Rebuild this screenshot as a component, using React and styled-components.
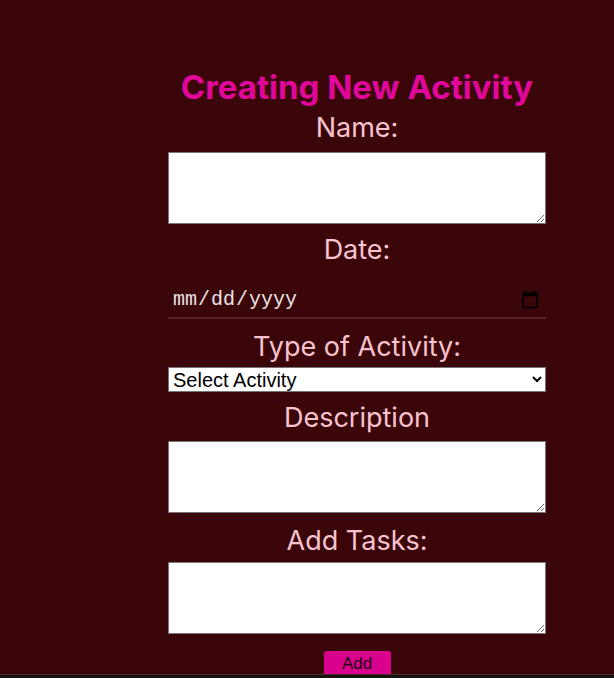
import React, { useState } from "react";
import styled, { createGlobalStyle } from "styled-components";

const GlobalStyle = createGlobalStyle`
  html, body {
    margin: 0;
    padding: 0;
    background: #171212;
  }
  #root {
    height: 678px;
    overflow: hidden;
  }
`;

const StyledPage = styled.div`
  display: grid;
  grid-template-columns: 100px 1fr;
  height: 675px;
  overflow: hidden;
  background: #3b060a;
  border-bottom: 1px solid #4d2a2a;
  box-sizing: border-box;
`;

const StyledSide = styled.aside`
  background: #3b060a;
`;

const StyledMain = styled.main`
  display: flex;
  justify-content: center;
  padding-top: 65px;
`;

const StyledForm = styled.form`
  display: flex;
  flex-direction: column;
  align-items: center;
  width: 378px;
`;

const StyledTitle = styled.h1`
  margin: 0;
  font-family: Inter, "Liberation Sans", sans-serif;
  font-weight: 700;
  font-size: 33px;
  line-height: 45px;
  color: #e0079a;
  white-space: nowrap;
`;

const StyledLabel = styled.label`
  font-family: Inter, "Liberation Sans", sans-serif;
  font-weight: 400;
  font-size: 27px;
  line-height: 35px;
  color: #f8c3cf;
  margin-top: ${(p) => p.$top || 0}px;
  margin-bottom: ${(p) => p.$bottom || 0}px;
`;

const StyledTextArea = styled.textarea`
  width: 100%;
  height: 72px;
  box-sizing: border-box;
  background: #ffffff;
  border: 1px solid #767676;
  font-family: "Liberation Sans", sans-serif;
  font-size: 16px;
  resize: vertical;
`;

const StyledDate = styled.input`
  width: 100%;
  box-sizing: border-box;
  height: 37px;
  padding: 0 4px;
  margin-top: 15px;
  background: transparent;
  border: none;
  border-bottom: 2px solid #5a2427;
  color: #e9e2e2;
  font-family: "Liberation Mono", monospace;
  font-size: 20px;
  color-scheme: light;
  outline: none;
`;

const StyledSelect = styled.select`
  width: 100%;
  height: 25px;
  box-sizing: border-box;
  background: #ffffff;
  border: 1px solid #767676;
  font-family: "Liberation Sans", Arial, sans-serif;
  font-size: 20px;
  color: #000;
  padding: 0;
`;

const StyledButton = styled.button`
  margin-top: 17px;
  width: 67px;
  height: 30px;
  background: #d9008e;
  color: #1b0010;
  border: none;
  border-radius: 3px;
  font-family: "Liberation Sans", Arial, sans-serif;
  font-size: 17px;
  line-height: 20px;
  cursor: pointer;
  padding: 3px 0 0;
  align-self: center;
  display: flex;
  justify-content: center;
  align-items: flex-start;
`;

const NewActivity = () => {
  const [form, setForm] = useState({
    name: "",
    date: "",
    type: "",
    description: "",
    tasks: "",
  });

  const update = (key) => (e) => setForm({ ...form, [key]: e.target.value });

  const onSubmit = (e) => {
    e.preventDefault();
  };

  return (
    <StyledForm onSubmit={onSubmit}>
      <StyledTitle>Creating New Activity</StyledTitle>
      <StyledLabel $bottom={7}>Name:</StyledLabel>
      <StyledTextArea value={form.name} onChange={update("name")} />
      <StyledLabel $top={8}>Date:</StyledLabel>
      <StyledDate type="date" value={form.date} onChange={update("date")} />
      <StyledLabel $top={10} $bottom={3}>
        Type of Activity:
      </StyledLabel>
      <StyledSelect value={form.type} onChange={update("type")}>
        <option value="">Select Activity</option>
        <option value="work">Work</option>
        <option value="study">Study</option>
        <option value="sport">Sport</option>
      </StyledSelect>
      <StyledLabel $top={8} $bottom={6}>
        Description
      </StyledLabel>
      <StyledTextArea value={form.description} onChange={update("description")} />
      <StyledLabel $top={10} $bottom={4}>
        Add Tasks:
      </StyledLabel>
      <StyledTextArea value={form.tasks} onChange={update("tasks")} />
      <StyledButton type="submit">Add</StyledButton>
    </StyledForm>
  );
};

const App = () => (
  <>
    <GlobalStyle />
    <StyledPage>
      <StyledSide />
      <StyledMain>
        <NewActivity />
      </StyledMain>
    </StyledPage>
  </>
);

export default App;
